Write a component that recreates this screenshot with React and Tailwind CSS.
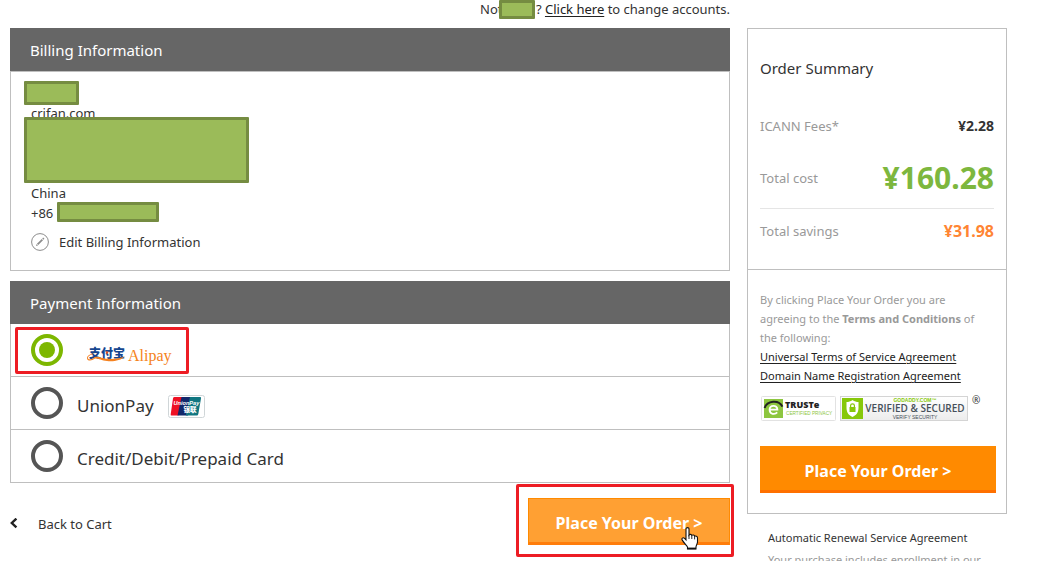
import React from "react";

function Redaction({ className }) {
  return (
    <span
      aria-hidden="true"
      className={`absolute rounded-[1px] border-[3px] border-[#758c41] bg-[#9bbb59] ${className}`}
    />
  );
}

function Highlight({ className }) {
  return (
    <span
      aria-hidden="true"
      className={`pointer-events-none absolute rounded-xs border-[3px] border-[#ed1c24] ${className}`}
    />
  );
}

function PanelHeader({ children }) {
  return (
    <h2 className="bg-[#666666] px-5 pt-px text-[15px] leading-[42px] text-white">{children}</h2>
  );
}

function PencilIcon() {
  return (
    <svg width="18" height="18" viewBox="0 0 18 18" aria-hidden="true">
      <circle cx="9" cy="9" r="8.4" fill="none" stroke="#8c8c8c" strokeWidth="1" />
      <path d="M5 13 L5.6 11 L7 12.4 Z" fill="#8c8c8c" />
      <path d="M6.6 11.4 L11.4 6.6" stroke="#8c8c8c" strokeWidth="1.8" />
      <path d="M11.9 6.1 L12.8 5.2" stroke="#8c8c8c" strokeWidth="1.8" />
    </svg>
  );
}

function AlipayLogo() {
  return (
    <svg width="88" height="24" viewBox="0 0 88 24" role="img" aria-label="Alipay">
      <text x="4" y="17" fontSize="12" fontWeight="900" fill="#15468f" fontFamily="'Noto Sans CJK SC', sans-serif">
        支付宝
      </text>
      <path
        d="M11 12.5 C6 13 3 15.2 3 17 C3 19 7 18.6 9.5 16.2 C13 14.6 16 17.4 23 17.8 C30 18.2 36.5 17.2 40 15 C36 20 28 20.6 22 20 C16 19.4 13 17 10 17.6 C6.5 20.4 2 20 2 17.2 C2 14.4 6 12.4 11 12.5 Z"
        fill="#f58220"
      />
      <circle cx="22" cy="11.5" r="1.2" fill="#e8501e" />
      <text x="43" y="20" fontSize="16" fill="#f58220" fontFamily="'Liberation Serif', serif">
        Alipay
      </text>
    </svg>
  );
}

function UnionPayLogo() {
  return (
    <svg width="37" height="23" viewBox="0 0 37 23" role="img" aria-label="UnionPay">
      <rect x="0.5" y="0.5" width="36" height="22" rx="2" fill="#fff" stroke="#d0d6d8" />
      <path d="M6.5 2 H15 L10.5 20.5 H3.5 Q2.4 20.5 2.7 19.2 L5 3.4 Q5.3 2 6.5 2 Z" fill="#ee1124" />
      <path d="M13.5 2 H24 L20 20.5 H9.5 Z" fill="#12286b" />
      <path d="M22 2 H32 Q33.4 2 33 3.4 L30.3 19 Q30 20.5 28.8 20.5 H17.8 Z" fill="#107680" />
      <text x="5.5" y="10" fontSize="5.6" fontWeight="700" fontStyle="italic" fill="#fff" fontFamily="'Liberation Sans', sans-serif">
        UnionPay
      </text>
      <text x="15.5" y="17" fontSize="6.5" fontWeight="900" fill="#fff" fontFamily="'Noto Sans CJK SC', sans-serif">
        银联
      </text>
    </svg>
  );
}

function TrusteBadge() {
  return (
    <svg width="75" height="25" viewBox="0 0 75 25" role="img" aria-label="TRUSTe Certified Privacy">
      <rect x="0.5" y="0.5" width="74" height="24" rx="1" fill="#fff" stroke="#e2e2e2" />
      <rect x="3" y="3" width="19" height="19" fill="#8dc63f" />
      <path d="M3.6 12 C6 4.2 18 3.4 21.4 10.6" fill="none" stroke="#222" strokeWidth="2" />
      <path d="M8.8 13.6 H16.4 C16.4 8.6 8.6 8.6 8.6 13.8 C8.6 18.6 14 18.8 16.2 16.4" fill="none" stroke="#fff" strokeWidth="1.8" />
      <text x="24" y="12" fontSize="9" fontWeight="800" fill="#222" fontFamily="'Open Sans', sans-serif">
        TRUSTe
      </text>
      <text x="25" y="18.5" fontSize="4.7" fill="#8dc63f" fontFamily="'Liberation Sans', sans-serif">
        CERTIFIED PRIVACY
      </text>
    </svg>
  );
}

function VerifiedBadge() {
  return (
    <svg width="128" height="25" viewBox="0 0 128 25" role="img" aria-label="GoDaddy Verified and Secured">
      <defs>
        <linearGradient id="badgeFill" x1="0" y1="0" x2="0" y2="1">
          <stop offset="0" stopColor="#ffffff" />
          <stop offset="1" stopColor="#ececec" />
        </linearGradient>
      </defs>
      <rect x="0.5" y="0.5" width="127" height="24" fill="url(#badgeFill)" stroke="#d4d4d4" />
      <rect x="2" y="2" width="21" height="21" fill="#87c80a" />
      <path d="M12.5 4 C10.5 5.6 8.5 6 6.5 6 V12 C6.5 16.5 9 19.5 12.5 21 C16 19.5 18.5 16.5 18.5 12 V6 C16.5 6 14.5 5.6 12.5 4 Z" fill="#fff" />
      <rect x="9.5" y="11" width="6" height="5" fill="#87c80a" />
      <path d="M10.6 11 V9.6 C10.6 7.4 14.4 7.4 14.4 9.6 V11" fill="none" stroke="#87c80a" strokeWidth="1.2" />
      <text x="75" y="6" fontSize="5" fontWeight="700" textAnchor="middle" fill="#87c80a" fontFamily="'Liberation Sans', sans-serif">
        GODADDY.COM™
      </text>
      <text x="75" y="16" fontSize="10" fontWeight="600" textAnchor="middle" fill="#46505a" fontFamily="'Open Sans', sans-serif">
        VERIFIED &amp; SECURED
      </text>
      <text x="75" y="22.5" fontSize="5" textAnchor="middle" fill="#46505a" fontFamily="'Liberation Sans', sans-serif">
        VERIFY SECURITY
      </text>
    </svg>
  );
}

function HandCursor() {
  return (
    <svg className="pointer-events-none absolute top-[29px] left-[153px]" width="18" height="23" viewBox="0 0 18 23" aria-hidden="true">
      <path
        d="M5 1.8 C5 0.2 8 0.2 8 1.8 V8 C8.6 7 10.6 7.2 10.8 8.4 C11.6 7.6 13.4 8 13.6 9.2 C14.6 8.6 16.5 9.2 16.5 10.8 V15 C16.5 17 15 18.4 15 20 V22 H6.5 V20 C5 18 3.2 16 1.4 13.4 C0 11.4 2 10 3.6 11.4 L5 12.8 Z"
        fill="#fff"
        stroke="#111"
        strokeWidth="1.1"
      />
      <path d="M8 8 V12 M10.8 8.6 V12 M13.6 9.4 V12.4" stroke="#111" strokeWidth="0.9" />
      <path d="M6.5 21.4 H15" stroke="#111" strokeWidth="1.6" />
    </svg>
  );
}

function PaymentOption({ id, label, children, defaultChecked }) {
  return (
    <div className="flex h-[53px] items-center border-b border-[#bfbfbf] pl-5">
      <input
        type="radio"
        name="payment"
        id={id}
        defaultChecked={defaultChecked}
        className="size-8 shrink-0 appearance-none rounded-full border-4 border-[#555555] bg-white checked:border-[#7db700] checked:bg-[#7db700] checked:bg-clip-content checked:p-1"
      />
      <label htmlFor={id} className="flex items-center pt-[6px] pl-[14px] text-[17px] leading-7">
        {label}
        {children}
      </label>
    </div>
  );
}

function SummaryRow({ label, value, className, valueClass }) {
  return (
    <div className={`flex items-center justify-between ${className}`}>
      <dt className="text-[13px] leading-5 text-[#999999]">{label}</dt>
      <dd className={`font-bold ${valueClass}`}>{value}</dd>
    </div>
  );
}

export default function App() {
  return (
    <div className="flex items-start gap-[17px] bg-white pr-[33px] pl-[10px] font-['Noto_Sans','Open_Sans',sans-serif] text-[13px] leading-5 text-[#333333]">
      <main className="min-w-0 flex-1">
        <div className="flex h-7 justify-end">
          <p className="relative leading-[18px]">
            Not <span className="inline-block w-[30px]" />?{" "}
            <a href="#accounts" className="text-[#222222] underline underline-offset-2">Click here</a> to change accounts.
            <Redaction className="top-0 left-[19px] h-[19px] w-[36px]" />
          </p>
        </div>

        <section>
          <PanelHeader>Billing Information</PanelHeader>
          <div className="relative border border-[#bfbfbf] px-5 pt-[11px] pb-[18px]">
            <address className="not-italic">
              <p className="h-5" />
              <p>crifan.com</p>
              <p className="h-[60px]" />
              <p>China</p>
              <p>+86</p>
            </address>
            <Redaction className="top-[9px] left-[13px] h-6 w-[55px]" />
            <Redaction className="top-[45px] left-[13px] h-[66px] w-[225px]" />
            <Redaction className="top-[130px] left-[46px] h-5 w-[102px]" />
            <a href="#edit" className="mt-[9px] flex items-center gap-[10px]">
              <PencilIcon />
              Edit Billing Information
            </a>
          </div>
        </section>

        <section className="mt-[10px]">
          <PanelHeader>Payment Information</PanelHeader>
          <fieldset className="relative border-x border-[#bfbfbf]">
            <PaymentOption id="alipay" defaultChecked label={<span className="pl-2"><AlipayLogo /></span>} />
            <PaymentOption id="unionpay" label="UnionPay">
              <span className="pl-[14px]"><UnionPayLogo /></span>
            </PaymentOption>
            <PaymentOption id="card" label="Credit/Debit/Prepaid Card" />
            <Highlight className="top-[3px] left-[4px] h-[47px] w-[174px]" />
          </fieldset>
        </section>

        <div className="mt-[15px] flex items-center justify-between">
          <a href="#cart" className="flex items-center pt-1">
            <svg width="8" height="12" viewBox="0 0 8 12" aria-hidden="true">
              <path d="M6.4 0.6 L1.8 5 L6.4 9.4" fill="none" stroke="#222" strokeWidth="2.4" />
            </svg>
            <span className="pl-5">Back to Cart</span>
          </a>
          <div className="relative">
            <button
              type="button"
              className="h-[47px] w-[202px] border border-b-[3px] border-[#ff8a00] border-b-[#ff7d0a] bg-[#ffa033] pt-1 text-[16px] font-bold text-white"
            >
              Place Your Order &gt;
            </button>
            <Highlight className="-top-[14px] -left-[12px] h-[73px] w-[218px]" />
            <HandCursor />
          </div>
        </div>
      </main>

      <aside className="w-[260px] shrink-0 pt-7">
        <div className="border border-[#bfbfbf]">
          <section className="border-b border-[#bfbfbf] px-3 pt-[27px] pb-7">
            <h2 className="text-[15px] leading-6">Order Summary</h2>
            <dl>
              <SummaryRow className="mt-9" label="ICANN Fees*" value="¥2.28" valueClass="text-[14px] leading-5" />
              <SummaryRow className="mt-6 border-b border-[#e5e5e5] pb-3" label="Total cost" value="¥160.28" valueClass="text-[30px] leading-9 text-[#7db73e]" />
              <SummaryRow className="mt-3" label="Total savings" value="¥31.98" valueClass="text-[16px] leading-5 text-[#ff8533]" />
            </dl>
          </section>
          <section className="pt-5 pr-[10px] pb-5 pl-3 text-[11px] leading-[19px]">
            <p className="text-[#999999]">
              By clicking Place Your Order you are
              <br />
              agreeing to the <strong>Terms and Conditions</strong> of
              <br />
              the following:
            </p>
            <a href="#universal" className="block text-[#222222] underline underline-offset-2">Universal Terms of Service Agreement</a>
            <a href="#domain" className="block text-[#222222] underline underline-offset-2">Domain Name Registration Agreement</a>
            <div className="mt-[11px] flex items-start gap-1 pl-px">
              <TrusteBadge />
              <VerifiedBadge />
              <span className="-mt-1 text-[10px] leading-4">®</span>
            </div>
            <button
              type="button"
              className="mt-[25px] block h-[47px] w-full border-b-[3px] border-[#ff7000] bg-[#ff8a00] pt-[6px] text-[16px] font-bold text-white"
            >
              Place Your Order &gt;
            </button>
          </section>
        </div>
        <section className="pt-[14px] pl-[21px] text-[11px]">
          <h3 className="leading-5">Automatic Renewal Service Agreement</h3>
          <p className="pt-[2px] leading-[19px] text-[#999999]">Your purchase includes enrollment in our</p>
        </section>
      </aside>
    </div>
  );
}
